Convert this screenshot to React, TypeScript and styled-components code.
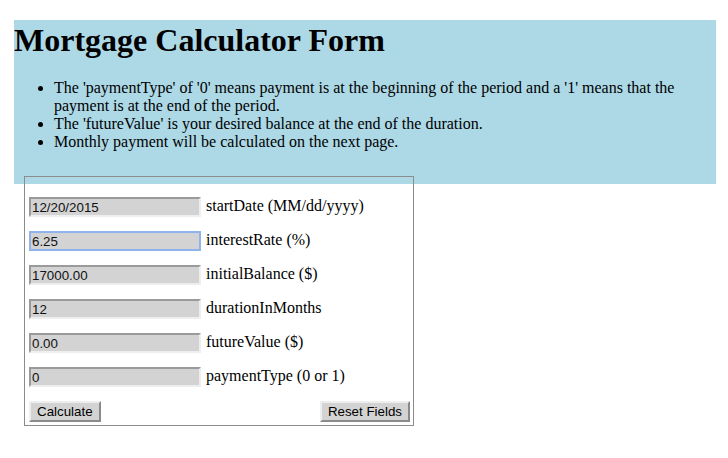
import React from "react";
import styled, { createGlobalStyle } from "styled-components";

const Global = createGlobalStyle`
  html, body { margin: 0; padding: 0; background: #fff; }
  body { font-family: "Liberation Serif", "Times New Roman", serif; color: #000; }
`;

const Page = styled.div`
  padding: 20px 12px 0 14px;
`;

const Banner = styled.div`
  background: #add8e6;
  height: 164px;
  box-sizing: border-box;
`;

const Title = styled.h1`
  margin: 0;
  padding-top: 2px;
  font-size: 32px;
  font-weight: bold;
  line-height: 37px;
`;

const Notes = styled.ul`
  margin: 20px 0 0 0;
  padding-left: 40px;
  font-size: 16px;
  line-height: 18px;
  max-width: 640px;
`;

const Form = styled.form`
  box-sizing: border-box;
  margin: -8px 0 0 10px;
  width: 390px;
  border: 1px solid #8c8c8c;
  padding: 20px 3px 3px 4px;
  display: flex;
  flex-direction: column;
  gap: 14px;
  position: relative;
`;

const Row = styled.div`
  display: flex;
  align-items: center;
  gap: 5px;
  height: 20px;
`;

const Field = styled.input<{ $focused?: boolean }>`
  box-sizing: border-box;
  width: 172px;
  height: 20px;
  margin: 0;
  padding: 0 1px;
  background: #d3d3d3;
  border: 2px solid;
  border-color: ${(p) =>
    p.$focused ? "#8fb3ec" : "#9a9a9a #eeeeee #eeeeee #9a9a9a"};
  font-family: "Liberation Sans", Arial, sans-serif;
  font-size: 13.33px;
  color: #111;
  outline: none;
`;

const Label = styled.span`
  font-size: 16px;
  line-height: 20px;
  position: relative;
  top: -1px;
`;

const Actions = styled.div`
  display: flex;
  justify-content: space-between;
  height: 21px;
`;

const Button = styled.button`
  box-sizing: border-box;
  height: 21px;
  margin: 0;
  padding: 0 6px;
  background: #d3d3d3;
  border: 2px solid;
  border-color: #eeeeee #8a8a8a #8a8a8a #eeeeee;
  font-family: "Liberation Sans", Arial, sans-serif;
  font-size: 13.33px;
  color: #000;
  border-radius: 0;
`;

const fields = [
  { value: "12/20/2015", label: "startDate (MM/dd/yyyy)" },
  { value: "6.25", label: "interestRate (%)", focused: true },
  { value: "17000.00", label: "initialBalance ($)" },
  { value: "12", label: "durationInMonths" },
  { value: "0.00", label: "futureValue ($)" },
  { value: "0", label: "paymentType (0 or 1)" },
];

export default function App() {
  return (
    <>
      <Global />
      <Page>
        <Banner>
          <Title>Mortgage Calculator Form</Title>
          <Notes>
            <li>
              The 'paymentType' of '0' means payment is at the beginning of the period and a '1' means that the
              payment is at the end of the period.
            </li>
            <li>The 'futureValue' is your desired balance at the end of the duration.</li>
            <li>Monthly payment will be calculated on the next page.</li>
          </Notes>
        </Banner>
        <Form onSubmit={(e) => e.preventDefault()}>
          {fields.map((f) => (
            <Row key={f.label}>
              <Field defaultValue={f.value} $focused={f.focused} />
              <Label>{f.label}</Label>
            </Row>
          ))}
          <Actions>
            <Button type="button">Calculate</Button>
            <Button type="button">Reset Fields</Button>
          </Actions>
        </Form>
      </Page>
    </>
  );
}
